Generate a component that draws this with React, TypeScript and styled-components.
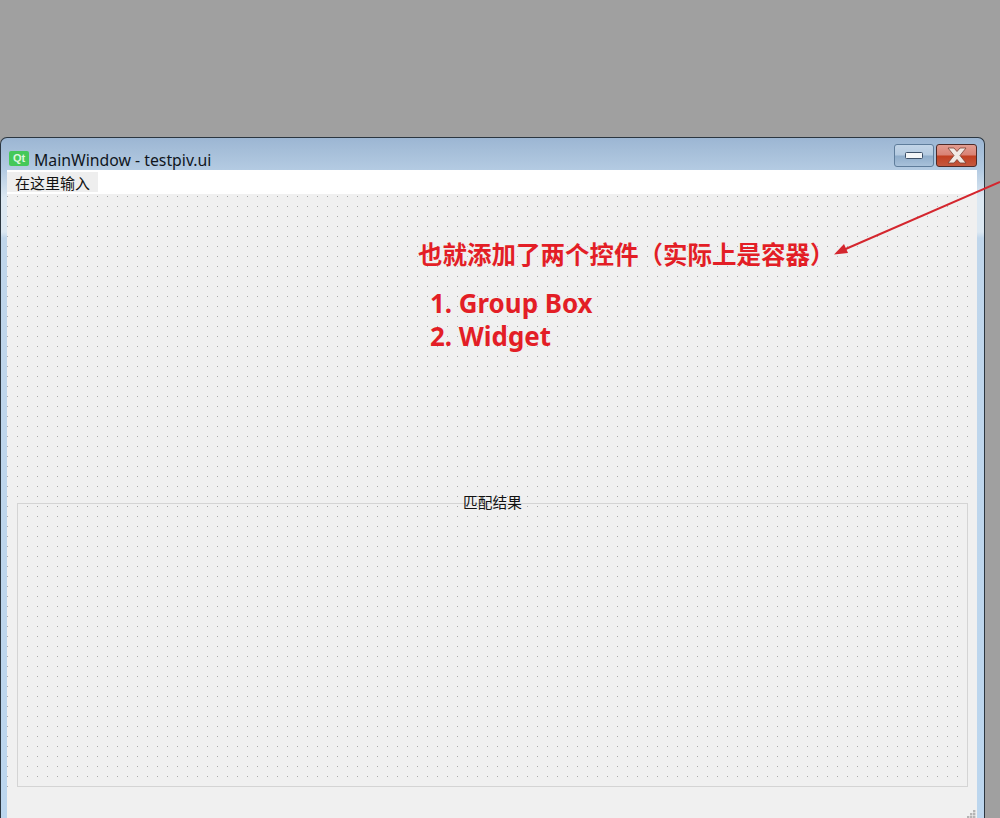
import styled, { createGlobalStyle } from 'styled-components'

const GlobalStyle = createGlobalStyle`
  html, body {
    margin: 0;
    padding: 0;
    height: 100%;
    overflow: hidden;
    background: #a0a0a0;
  }
`

const Screen = styled.div`
  position: relative;
  width: 1000px;
  height: 818px;
  padding-top: 137px;
  box-sizing: border-box;
  overflow: hidden;
  background: #a0a0a0;
  font-family: 'Noto Sans', 'Noto Sans CJK SC', sans-serif;
`

const Window = styled.div`
  width: 985px;
  height: 681px;
  box-sizing: border-box;
  display: flex;
  flex-direction: column;
  border: 1px solid #2b3640;
  border-bottom: none;
  border-radius: 7px 7px 0 0;
  padding: 0 7px 0 6px;
  background: linear-gradient(
    180deg,
    #9cb6d3 0,
    #b4cbe2 32px,
    #dce8f2 60px,
    #dce8f2 94px,
    #c0d6eb 100px,
    #bcd6ee 100%
  );
  overflow: hidden;
`

const TitleBar = styled.div`
  height: 32px;
  flex: none;
  display: flex;
  align-items: flex-start;
  margin: 0 -7px 0 -6px;
  padding: 0 7px 0 8px;
  box-sizing: border-box;
`

const QtLogo = styled.div`
  width: 20px;
  height: 15px;
  border-radius: 2px;
  background: #45c85a;
  color: #dff7df;
  font: 700 11px/15px 'Liberation Sans', sans-serif;
  text-align: center;
  margin: 13px 5px 0 0;
`

const Title = styled.div`
  flex: 1;
  font-size: 15.8px;
  line-height: 20px;
  color: #10161d;
  margin-top: 12px;
`

const CaptionButtons = styled.div`
  display: flex;
  gap: 2px;
  margin-top: 6px;
`

const CaptionButton = styled.div<{ $close?: boolean }>`
  width: ${(p) => (p.$close ? '41px' : '40px')};
  height: 23px;
  box-sizing: border-box;
  display: flex;
  align-items: center;
  justify-content: center;
  border-radius: 3px;
  border: 1px solid ${(p) => (p.$close ? '#4e2a28' : '#5f7d9b')};
  background: ${(p) =>
    p.$close
      ? 'linear-gradient(180deg, #e29c90 0, #d98274 48%, #c23f20 52%, #c4583f 100%)'
      : 'linear-gradient(180deg, #c3d5e8 0, #b4cae0 48%, #8fadcb 52%, #a8c1da 100%)'};
`

const MenuBar = styled.div`
  height: 24px;
  flex: none;
  display: flex;
  align-items: center;
  background: #ffffff;
`

const MenuItem = styled.div`
  height: 20px;
  padding: 0 8px;
  background: #eeeeee;
  font-size: 15px;
  line-height: 22px;
  color: #111111;
`

const Central = styled.div`
  flex: 1;
  display: flex;
  flex-direction: column;
  padding: 309px 9px 0 10px;
  background-color: #f0f0f0;
  background-image: conic-gradient(from 270deg at 1px 1px, #aaaaaa 25%, transparent 0);
  background-size: 10px 10px;
  background-position: 0 2px;
`

const GroupBox = styled.div`
  position: relative;
  height: 284px;
  box-sizing: border-box;
  border: 1px solid #d4d4d4;
`

const GroupTitle = styled.div`
  position: absolute;
  top: -12px;
  left: 0;
  right: 0;
  text-align: center;
  font-size: 14.7px;
  line-height: 20px;
  color: #111111;
`

const Footer = styled.div`
  height: 32px;
  margin: 0 -9px 0 -10px;
  background: #f0f0f0;
  display: flex;
  justify-content: flex-end;
  align-items: flex-end;
`

const SizeGrip = styled.svg`
  display: block;
`

const Annotation = styled.div`
  position: absolute;
  left: 0;
  top: 0;
  width: 1000px;
  height: 818px;
  pointer-events: none;
  color: #e31e26;
  font-weight: 700;
`

const Heading = styled.div`
  position: absolute;
  left: 418px;
  top: 236px;
  font-family: 'Noto Sans CJK SC', sans-serif;
  font-size: 24.5px;
  line-height: 36px;
  white-space: nowrap;
`

const NoteList = styled.div`
  position: absolute;
  left: 430px;
  top: 287px;
  font-size: 25.9px;
  line-height: 33px;
`

const Arrow = styled.svg`
  position: absolute;
  left: 825px;
  top: 175px;
`

const grip = [
  [6, 0],
  [3, 3],
  [6, 3],
  [0, 6],
  [3, 6],
  [6, 6]
]

export default function App() {
  return (
    <Screen>
      <GlobalStyle />
      <Window>
        <TitleBar>
          <QtLogo>Qt</QtLogo>
          <Title>MainWindow - testpiv.ui</Title>
          <CaptionButtons>
            <CaptionButton>
              <svg width="18" height="7" viewBox="0 0 18 7">
                <rect x="0.5" y="0.5" width="17" height="6" rx="1" fill="#f4f6f8" stroke="#3c5068" />
              </svg>
            </CaptionButton>
            <CaptionButton $close>
              <svg width="24" height="17" viewBox="0 0 24 17">
                <path
                  d="M3 1h6l3 3.5L15 1h6l-6 7.5 6 7.5h-6l-3-3.5L9 16H3l6-7.5z"
                  fill="#f1e9e4"
                  stroke="#7a4034"
                  strokeWidth="0.8"
                  strokeLinejoin="round"
                />
              </svg>
            </CaptionButton>
          </CaptionButtons>
        </TitleBar>
        <MenuBar>
          <MenuItem>在这里输入</MenuItem>
        </MenuBar>
        <Central>
          <GroupBox>
            <GroupTitle>匹配结果</GroupTitle>
          </GroupBox>
          <Footer>
            <SizeGrip width="10" height="10" viewBox="0 0 10 10">
              {grip.map(([x, y]) => (
                <rect key={`${x}-${y}`} x={x} y={y + 1} width="2.4" height="2.4" fill="#b4b4b4" />
              ))}
            </SizeGrip>
          </Footer>
        </Central>
      </Window>
      <Annotation>
        <Heading>也就添加了两个控件（实际上是容器）</Heading>
        <NoteList>
          <div>1. Group Box</div>
          <div>2. Widget</div>
        </NoteList>
        <Arrow width="175" height="90" viewBox="0 0 175 90">
          <path d="M175 7 L16 76" stroke="#d4262e" strokeWidth="2" fill="none" />
          <path d="M9 79.5 L19 69 L23 78 Z" fill="#d4262e" />
        </Arrow>
      </Annotation>
    </Screen>
  )
}
